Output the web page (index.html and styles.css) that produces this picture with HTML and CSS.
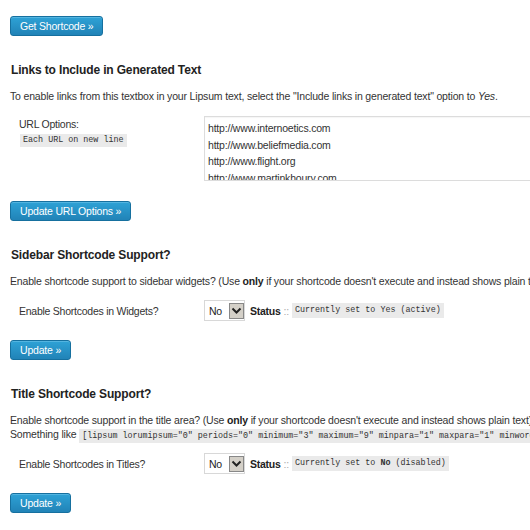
FILE: index.html
```html
<!DOCTYPE html>
<html>
<head>
<meta charset="utf-8">
<link rel="stylesheet" href="styles.css">
</head>
<body>
<div class="wrap">
  <div class="btn-row first"><span class="button">Get Shortcode &raquo;</span></div>

  <h3 class="heading">Links to Include in Generated Text</h3>
  <p class="desc">To enable links from this textbox in your Lipsum text, select the "Include links in generated text" option to <em>Yes</em>.</p>
  <div class="form-row url-row">
    <div class="label">URL Options:<br><code class="hint">Each URL on new line</code></div>
    <textarea class="urls" readonly>http://www.internoetics.com
http://www.beliefmedia.com
http://www.flight.org
http://www.martinkhoury.com
http://www.example.com</textarea>
  </div>
  <div class="btn-row"><span class="button">Update URL Options &raquo;</span></div>

  <h3 class="heading">Sidebar Shortcode Support?</h3>
  <p class="desc">Enable shortcode support to sidebar widgets? (Use <strong>only</strong> if your shortcode doesn't execute and instead shows plain text)</p>
  <div class="form-row select-row">
    <div class="label">Enable Shortcodes in Widgets?</div>
    <div class="field">
      <span class="select"><span class="sel-val">No</span><span class="sel-arrow"><svg width="11" height="8" viewBox="0 0 11 8"><path d="M1.5 1.5 L5.5 5.5 L9.5 1.5" fill="none" stroke="#222" stroke-width="2"/></svg></span></span>
      <strong class="status">Status</strong> <span class="sep">::</span> <code class="state">Currently set to Yes (active)</code>
    </div>
  </div>
  <div class="btn-row"><span class="button">Update &raquo;</span></div>

  <h3 class="heading">Title Shortcode Support?</h3>
  <p class="desc">Enable shortcode support in the title area? (Use <strong>only</strong> if your shortcode doesn't execute and instead shows plain text)<br>Something like <code class="inline">[lipsum lorumipsum="0" periods="0" minimum="3" maximum="9" minpara="1" maxpara="1" minwords="3"]</code></p>
  <div class="form-row select-row">
    <div class="label">Enable Shortcodes in Titles?</div>
    <div class="field">
      <span class="select"><span class="sel-val">No</span><span class="sel-arrow"><svg width="11" height="8" viewBox="0 0 11 8"><path d="M1.5 1.5 L5.5 5.5 L9.5 1.5" fill="none" stroke="#222" stroke-width="2"/></svg></span></span>
      <strong class="status">Status</strong> <span class="sep">::</span> <code class="state">Currently set to <b>No</b> (disabled)</code>
    </div>
  </div>
  <div class="btn-row"><span class="button">Update &raquo;</span></div>
</div>
</body>
</html>
```
FILE: styles.css
```css
html, body {
  margin: 0;
  padding: 0;
  background: #fff;
  overflow: hidden;
}
body {
  font-family: "Liberation Sans", Arial, sans-serif;
  font-size: 10.5px;
  letter-spacing: -0.25px;
  color: #333;
}
.wrap {
  padding: 16px 0 0 10px;
  width: 900px;
}
.btn-row {
  display: flex;
  margin: 0;
}
.button {
  display: inline-block;
  height: 18px;
  line-height: 18px;
  padding: 0 9px;
  color: #fff;
  font-size: 10.5px;
  letter-spacing: -0.2px;
  background: linear-gradient(#2ea2d6, #2183b7);
  border: 1px solid #16709f;
  border-radius: 3px;
  box-shadow: 0 1px 0 rgba(120,200,235,0.5) inset;
}
.heading {
  margin: 26px 0 0 1px;
  font-size: 12px;
  letter-spacing: -0.15px;
  font-weight: bold;
  color: #222;
  line-height: 16px;
}
.desc {
  margin: 11px 0 0 0;
  white-space: nowrap;
  line-height: 14px;
  letter-spacing: -0.17px;
}
.desc strong { color: #222; }
.form-row {
  display: flex;
  margin: 0;
}
.label {
  width: 185px;
  padding-left: 9px;
  line-height: 14px;
}
.url-row {
  margin-top: 13px;
}
.url-row .label {
  padding-top: 1px;
}
.hint, .state, .inline {
  font-family: "Liberation Mono", "DejaVu Sans Mono", monospace;
  font-size: 8.4px;
  letter-spacing: 0;
  background: #eaeaea;
  color: #333;
}
.hint {
  display: inline-block;
  margin-top: 3px;
  margin-left: 1px;
  padding: 2px 3px;
  line-height: 9px;
}
.urls {
  width: 400px;
  height: 65px;
  margin: 0;
  padding: 3px 3px 0 3px;
  border: 1px solid #dcdcdc;
  border-right: none;
  font-family: "Liberation Sans", Arial, sans-serif;
  font-size: 10.5px;
  letter-spacing: -0.2px;
  line-height: 16.5px;
  color: #333;
  resize: none;
  overflow: hidden;
  box-sizing: border-box;
  box-shadow: inset 0 1px 1px rgba(0,0,0,0.04);
  outline: none;
}
.url-row + .btn-row { margin-top: 20px; }
.select-row {
  margin-top: 12px;
  align-items: center;
}
.select-row + .btn-row { margin-top: 19px; }
.field {
  display: flex;
  align-items: center;
  white-space: nowrap;
}
.select {
  display: inline-flex;
  align-items: center;
  height: 21px;
  width: 41px;
  border: 1px solid #d8d8d8;
  box-sizing: border-box;
  background: #fff;
}
.sel-val {
  padding-left: 4px;
  width: 20px;
  color: #222;
}
.sel-arrow {
  display: inline-flex;
  align-items: center;
  justify-content: center;
  width: 13px;
  height: 14px;
  background: #d4d0c8;
  border: 1px solid #888;
}
.status {
  margin-left: 5px;
  color: #222;
}
.sep {
  color: #aaa;
  margin: 0 3px;
}
.state {
  padding: 3px 3px;
  line-height: 9px;
}
.state b { font-weight: bold; }
.inline {
  padding: 2px 3px;
  line-height: 9px;
}
```
